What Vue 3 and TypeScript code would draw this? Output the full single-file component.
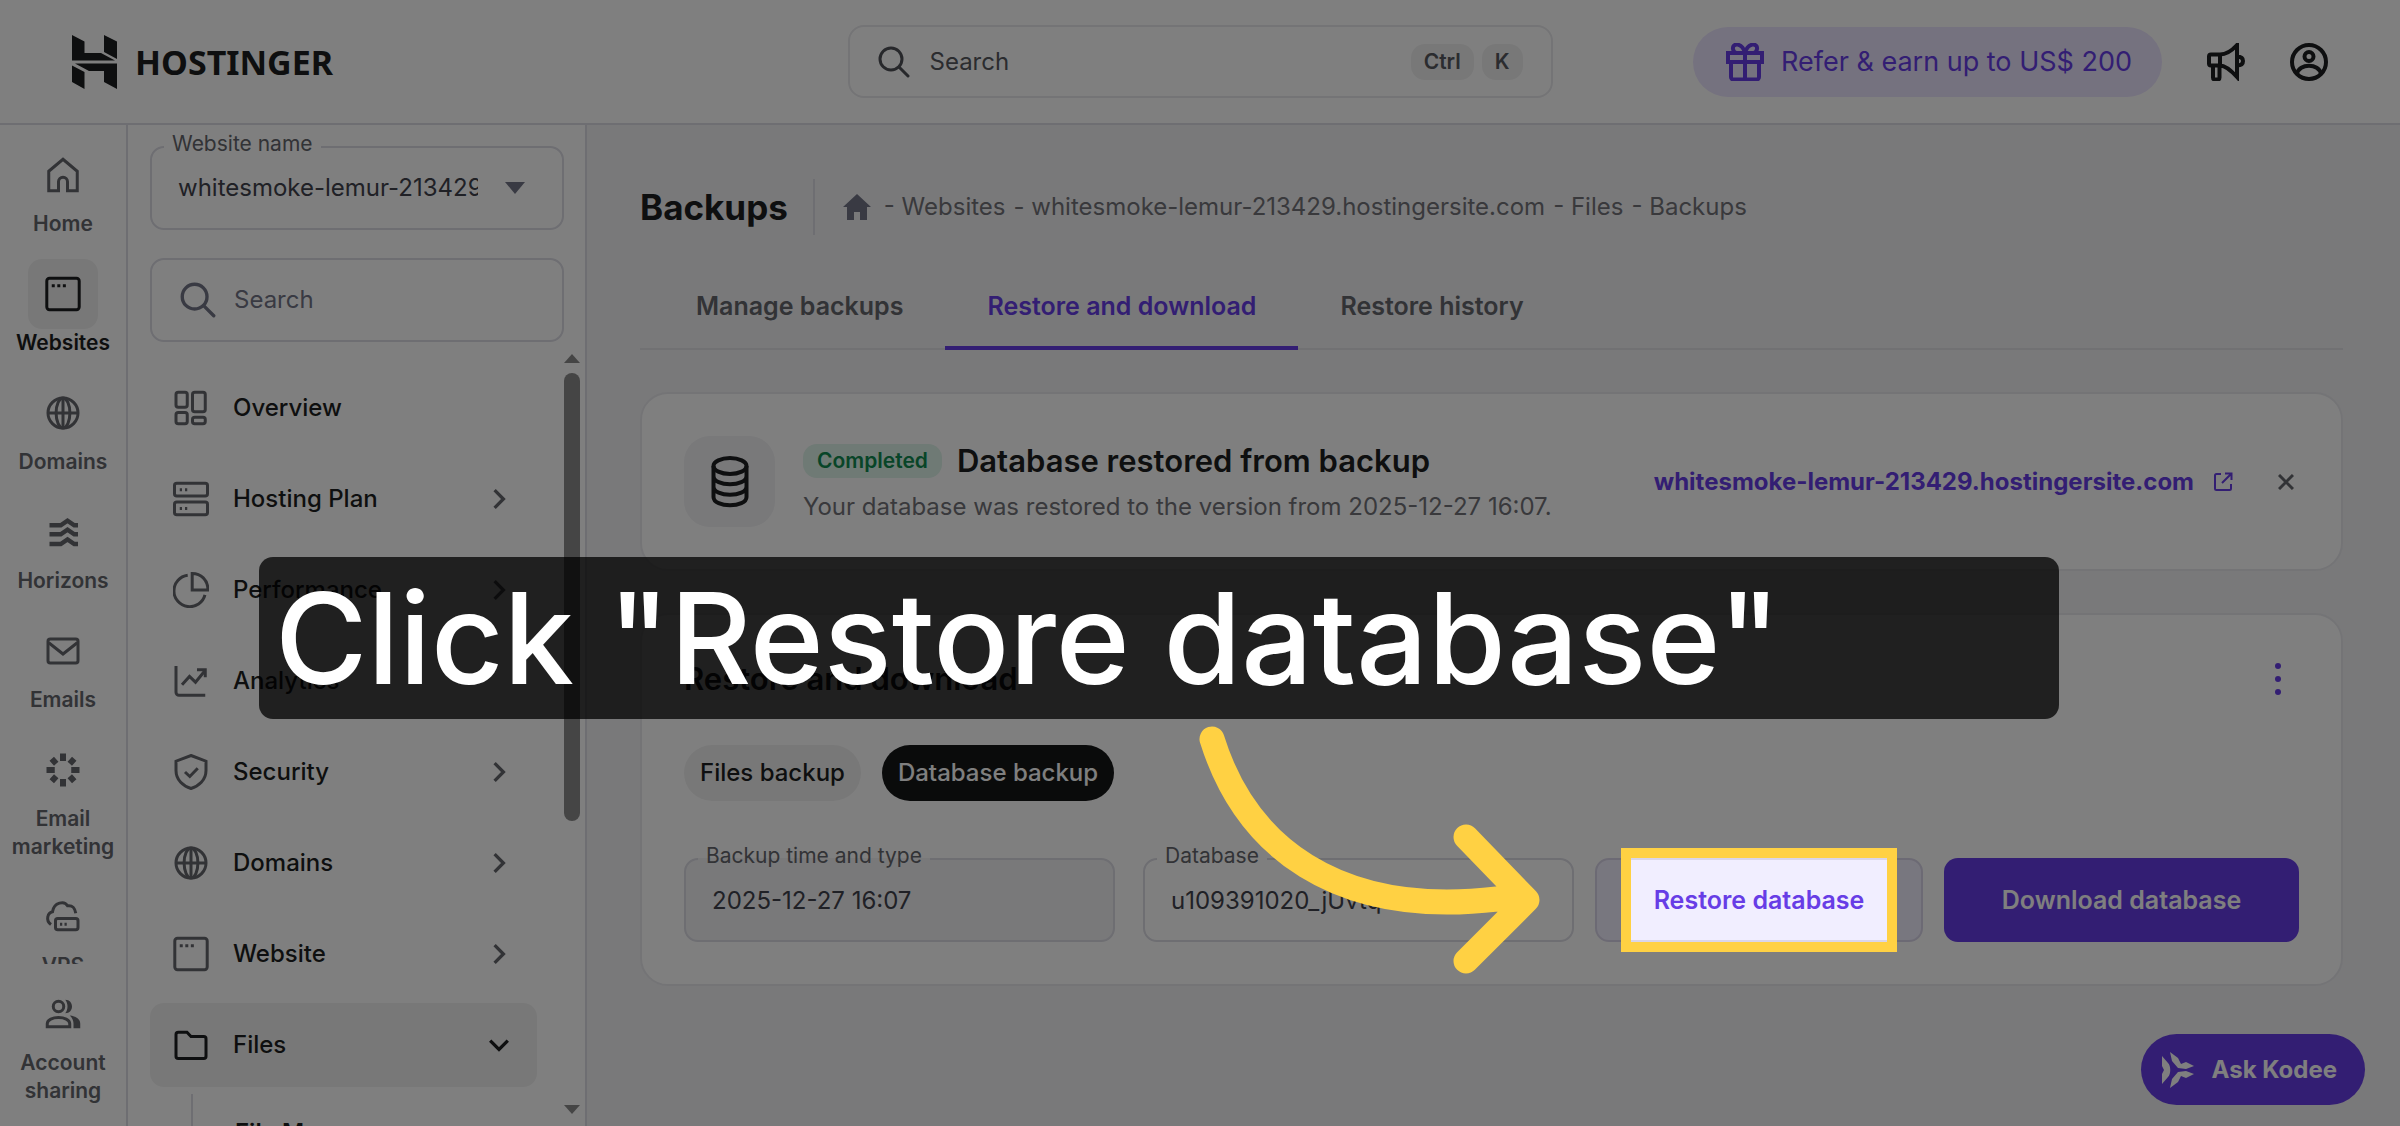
<script setup lang="ts">
interface RailItem {
  label: string
  icon: string
  active?: boolean
}

interface MenuItem {
  label: string
  icon: string
  expandable?: boolean
  open?: boolean
}

// Icons share a 24-unit grid; strokes use the current text colour.
const icons: Record<string, string> = {
  home: '<path d="M2.5 9.5 12 1.5l9.500 8V22.500H15v-6a3 3 0 0 0-6 0v6H2.500z"/>',
  window: '<rect x="1.200" y="1.500" width="21.600" height="21" rx="1.800"/><path d="M4.500 6.500h2M8.200 6.500h2M11.900 6.500h2"/>',
  globe: '<circle cx="12" cy="12" r="10"/><ellipse cx="12" cy="12" rx="4.600" ry="10"/><path d="M2 12h20M12 2v20"/>',
  horizons: '<g stroke-width="3"><path d="M3 7.500h7.500l4.500-3 4.500 3H22M3 13.500h7.500l4.500-3 4.500 3H22M3 20h7.500l4.500-3 4.500 3H22"/></g>',
  mail: '<rect x="2" y="4" width="20" height="16" rx="1.500"/><path d="m2.500 6.500 9.500 7.500 9.500-7.500"/>',
  burst: '<g stroke-width="4"><path d="M12 1v5M12 18v5M1 12h5.500M17.500 12H23M4.500 4.500 7.500 7.800M16.500 16.200l3 3.300M4.500 19.500l3-3.300M16.500 7.800l3-3.300"/></g>',
  cloud: '<path d="M4 17c-4-3-2-8 1-8.500C6 2 13 1 15 4.500c4-.5 5 2 5.500 5"/><rect x="7" y="13" width="15" height="7.500" rx="1.500"/><path d="M10 16.800h1.500M13 16.800h1.500"/>',
  people: '<circle cx="9" cy="7" r="3.500"/><path d="M1.500 20.500v-2c0-5.500 15-5.500 15 0v2z"/><path fill="currentColor" stroke="none" d="M13.500 2.500c6 0 6 9 0 9 2-2.500 2-6.500 0-9zM16.500 13c4.500.5 7 2.500 7 5.500v3h-4.500v-3c0-2-.8-4-2.500-5.500z"/>',
  grid: '<rect x="2" y="1.500" width="7.500" height="10" rx="1.500"/><rect x="2" y="15" width="7.500" height="7.500" rx="1.500"/><rect x="13" y="1.500" width="8.500" height="13" rx="1.500"/><rect x="13" y="18.200" width="8.500" height="4.300" rx="1.500"/>',
  server: '<rect x="1" y="1.500" width="22" height="8.500" rx="1.500"/><rect x="1" y="14" width="22" height="8.500" rx="1.500"/><path d="M4.500 5.800h1.500M8 5.800h1.500M4.500 18.300h1.500M8 18.300h1.500"/>',
  pie: '<path d="M9.800 2.200a10.500 10.500 0 1 0 11.500 13"/><path d="M12.800 1v11h10.500C23.300 5 18.500 1 12.800 1z"/>',
  chart: '<path d="M2 2v17.500a2 2 0 0 0 2 2h17.500M6 14.500l5-5.500 4 3.800 6-7.300"/><path d="M16 4.500h5.500v5"/>',
  shield: '<path d="m12 1 10 3.800v6.200c0 6.500-5 10.500-10 12-5-1.500-10-5.500-10-12V4.800z"/><path d="m8 12 3.200 3 5.300-5.500"/>',
  folder: '<path d="M2 5a1.500 1.500 0 0 1 1.500-1.500h5.800L12 6.300h8.500A1.500 1.500 0 0 1 22 7.800v11.700a1.500 1.500 0 0 1-1.500 1.500h-17A1.500 1.500 0 0 1 2 19.500z"/>',
}

const railItems: RailItem[] = [
  { label: 'Home', icon: 'home' },
  { label: 'Websites', icon: 'window', active: true },
  { label: 'Domains', icon: 'globe' },
  { label: 'Horizons', icon: 'horizons' },
  { label: 'Emails', icon: 'mail' },
  { label: 'Email marketing', icon: 'burst' },
  { label: 'VPS', icon: 'cloud' },
]

const menuItems: MenuItem[] = [
  { label: 'Overview', icon: 'grid' },
  { label: 'Hosting Plan', icon: 'server', expandable: true },
  { label: 'Performance', icon: 'pie', expandable: true },
  { label: 'Analytics', icon: 'chart' },
  { label: 'Security', icon: 'shield', expandable: true },
  { label: 'Domains', icon: 'globe', expandable: true },
  { label: 'Website', icon: 'window', expandable: true },
  { label: 'Files', icon: 'folder', expandable: true, open: true },
]

const tabs = ['Manage backups', 'Restore and download', 'Restore history']
const activeTab = 'Restore and download'
const crumbs = ['Websites', 'whitesmoke-lemur-213429.hostingersite.com', 'Files', 'Backups']
</script>

<template>
  <div class="app">
    <header class="topbar">
      <a class="brand" href="#">
        <svg class="brand-mark" viewBox="0 0 45 54" aria-hidden="true">
          <path d="M0 0 12.500 6.500V18H29l14 7.500H0zM32 0l13 6.500V24l-13-7zM0 30.500l12.500 6.500V54L0 47zM3 28.500h42V54l-13-7V36H17z" fill="currentColor" />
        </svg>
        <span>HOSTINGER</span>
      </a>
      <label class="global-search">
        <svg class="icon-search" viewBox="0 0 32 32" aria-hidden="true"><circle cx="13" cy="13" r="11" /><path d="m21 21 9 9" /></svg>
        <input type="text" placeholder="Search" aria-label="Search everything" />
        <kbd>Ctrl</kbd>
        <kbd>K</kbd>
      </label>
      <div class="top-actions">
        <button class="refer" type="button">
          <svg viewBox="0 0 38 38" aria-hidden="true"><path d="M2 10h34v9H2zM5 19h28v15a2.500 2.500 0 0 1-2.500 2.500h-23A2.500 2.500 0 0 1 5 34zM19 10v26M19 10C16-1 6 0 7 6c.3 2 1.500 3.500 3 4M19 10c3-11 13-10 12-4-.3 2-1.500 3.500-3 4" /></svg>
          <span>Refer &amp; earn up to US$ 200</span>
        </button>
        <button class="icon-button" type="button" aria-label="Announcements">
          <svg viewBox="0 0 38 38" aria-hidden="true"><path d="M13 11.500H4A2 2 0 0 0 2 13.500v7a2 2 0 0 0 2 2h9zM13 11.500c6 0 12-4 17-9.500v32c-5-5.500-11-11.500-17-11.500M6 23v11.500a2 2 0 0 0 2 2h2.500a2 2 0 0 0 2-2V23M30 13.500c3.500 0 6 1.500 6 4.500s-2.500 4.500-6 4.500" /></svg>
        </button>
        <button class="icon-button" type="button" aria-label="Profile">
          <svg viewBox="0 0 38 38" aria-hidden="true"><circle cx="19" cy="19" r="17" /><circle cx="19" cy="13.500" r="4.500" /><path d="M7 31c2-11 22-11 24 0" /></svg>
        </button>
      </div>
    </header>

    <div class="body">
      <nav class="rail" aria-label="Main">
        <div class="rail-scroll">
          <a v-for="item in railItems" :key="item.label" href="#" class="rail-item" :class="{ active: item.active }">
            <span class="rail-tile"><svg viewBox="0 0 24 24" aria-hidden="true" v-html="icons[item.icon]" /></span>
            <span>{{ item.label }}</span>
          </a>
        </div>
        <div class="rail-bottom">
          <a href="#" class="rail-item">
            <span class="rail-tile"><svg viewBox="0 0 24 24" aria-hidden="true" v-html="icons.people" /></span>
            <span>Account sharing</span>
          </a>
        </div>
      </nav>

      <aside class="sidebar">
        <div class="field website-field">
          <label for="website">Website name</label>
          <select id="website"><option>whitesmoke-lemur-213429.hostingersite.com</option></select>
          <svg class="caret" viewBox="0 0 20 12" aria-hidden="true"><path d="M0 0h20L10 12z" /></svg>
        </div>
        <label class="side-search">
          <svg class="icon-search" viewBox="0 0 32 32" aria-hidden="true"><circle cx="13" cy="13" r="11" /><path d="m21 21 9 9" /></svg>
          <input type="text" placeholder="Search" aria-label="Search menu" />
        </label>
        <div class="menu-wrap">
          <nav class="menu" aria-label="Website">
            <a v-for="item in menuItems" :key="item.label" href="#" class="menu-item" :class="{ open: item.open }">
              <svg class="menu-icon" viewBox="0 0 24 24" aria-hidden="true" v-html="icons[item.icon]" />
              <span>{{ item.label }}</span>
              <svg v-if="item.expandable" class="chevron" viewBox="0 0 20 20" aria-hidden="true"><path d="m6 2 8 8-8 8" /></svg>
            </a>
            <div class="submenu"><a href="#">File Manager</a></div>
          </nav>
          <div class="scrollbar" aria-hidden="true">
            <svg viewBox="0 0 16 9"><path d="M8 0l8 9H0z" /></svg>
            <div class="track"><div class="thumb" /></div>
            <svg viewBox="0 0 16 9"><path d="M0 0h16L8 9z" /></svg>
          </div>
        </div>
      </aside>

      <main class="content">
        <div class="page-head">
          <h1>Backups</h1>
          <div class="crumbs">
            <svg viewBox="0 0 28 26" aria-label="Home"><path d="M14 0 28 13h-4v13h-7v-8h-6v8H4V13H0z" /></svg>
            <span v-for="crumb in crumbs" :key="crumb">- {{ crumb }}</span>
          </div>
        </div>

        <div class="tabs" role="tablist">
          <button v-for="tab in tabs" :key="tab" type="button" role="tab" :class="{ active: tab === activeTab }">{{ tab }}</button>
        </div>

        <section class="card notice">
          <div class="notice-icon">
            <svg viewBox="0 0 38 52" aria-hidden="true"><ellipse cx="19" cy="10" rx="16.500" ry="8" /><path d="M2.500 10v31c0 11 33 11 33 0V10M2.500 20c0 11 33 11 33 0M2.500 30.500c0 11 33 11 33 0" /></svg>
          </div>
          <div class="notice-text">
            <div class="notice-title"><span class="badge">Completed</span><h2>Database restored from backup</h2></div>
            <p>Your database was restored to the version from 2025-12-27 16:07.</p>
          </div>
          <a class="site-link" href="#">
            whitesmoke-lemur-213429.hostingersite.com
            <svg viewBox="0 0 20 20" aria-hidden="true"><path d="M8 2H3.500A1.500 1.500 0 0 0 2 3.500v13A1.500 1.500 0 0 0 3.500 18h13a1.500 1.500 0 0 0 1.500-1.500V12M12 1.500h6.500V8M18 2 9 11" /></svg>
          </a>
          <button class="close" type="button" aria-label="Dismiss">
            <svg viewBox="0 0 16 16" aria-hidden="true"><path d="m1 1 14 14M15 1 1 15" /></svg>
          </button>
        </section>

        <section class="card restore">
          <div class="restore-head">
            <h2>Restore and download</h2>
            <button type="button" aria-label="More options">
              <svg viewBox="0 0 6 32" aria-hidden="true"><circle cx="3" cy="3" r="3" /><circle cx="3" cy="16" r="3" /><circle cx="3" cy="29" r="3" /></svg>
            </button>
          </div>
          <div class="chips">
            <button type="button">Files backup</button>
            <button type="button" class="selected">Database backup</button>
          </div>
          <form class="restore-form" @submit.prevent>
            <div class="fields">
              <div class="field filled">
                <label for="time">Backup time and type</label>
                <input id="time" type="text" value="2025-12-27 16:07" readonly />
              </div>
              <div class="field">
                <label for="db">Database</label>
                <input id="db" type="text" value="u109391020_jUvtq" readonly />
              </div>
            </div>
            <div class="restore-cell">
              <button class="restore-button" type="button">Restore database</button>
              <div class="spotlight" aria-hidden="true" />
            </div>
            <button class="download-button" type="button">Download database</button>
          </form>
        </section>
      </main>
    </div>

    <button class="kodee" type="button">
      <svg viewBox="0 0 32 36" aria-hidden="true"><path d="M0 4l6 7c3 3 3 11 0 14l-6 7V22l2-4-2-4zM8 0l8 6 3 6 5-2 8 4-8 3-8-1-6-7zM8 36l8-6 3-6 5 2 8-4-8-3-8 1-6 7z" /></svg>
      <span>Ask Kodee</span>
    </button>

    <div class="caption">Click "Restore database"</div>
    <svg class="arrow" viewBox="0 0 360 280" aria-hidden="true"><path d="M22 29C55 135 145 208 307 189L335 190M276 127 337 190 276 251" /></svg>
  </div>
</template>

<style>
body {
  margin: 0;
}
</style>

<style scoped>
.app {
  --ink: #1d1e20;
  --muted: #65666c;
  --line: #dcdce4;
  --soft: #f1f1f1;
  --purple: #673de6;
  position: relative;
  display: flex;
  flex-direction: column;
  height: 100vh;
  overflow: hidden;
  background: #f2f2f5;
  color: var(--ink);
  font: 400 24px/36px Inter, 'Liberation Sans', sans-serif;
}
.app *,
.app *::before {
  box-sizing: border-box;
}
button,
input,
select {
  margin: 0;
  padding: 0;
  border: 0;
  background: none;
  color: inherit;
  font: inherit;
  outline: 0;
}
a {
  color: inherit;
  text-decoration: none;
}
h1,
h2,
p {
  margin: 0;
}
svg {
  display: block;
  flex: none;
  fill: none;
  stroke: currentColor;
  stroke-width: 2;
}
input {
  min-width: 0;
}
input::placeholder {
  color: #727586;
  opacity: 1;
}

.topbar {
  flex: none;
  display: grid;
  grid-template-columns: 1fr 705px 1fr;
  align-items: center;
  height: 125px;
  padding: 0 72px;
  border-bottom: 2px solid var(--line);
  background: #fff;
}
.brand {
  display: flex;
  align-items: center;
  gap: 18px;
  font: 700 34px/40px 'Noto Sans', sans-serif;
}
.brand-mark {
  width: 45px;
  height: 54px;
  stroke: none;
}
.global-search {
  display: flex;
  align-items: center;
  height: 73px;
  padding: 0 28px;
  border: 2px solid #e9e9ec;
  border-radius: 16px;
}
.icon-search {
  width: 32px;
  height: 32px;
  stroke-width: 3;
  stroke-linecap: round;
  color: #4f5057;
}
.global-search input {
  flex: 1;
  margin-left: 20px;
}
.global-search input::placeholder {
  color: #56585e;
}
kbd {
  margin-left: 8px;
  padding: 0 13px;
  border-radius: 14px;
  background: var(--soft);
  color: #56585e;
  font: 600 21px/36px Inter, sans-serif;
}
.top-actions {
  display: flex;
  align-items: center;
  justify-content: flex-end;
  gap: 45px;
}
.refer {
  display: flex;
  align-items: center;
  gap: 17px;
  height: 70px;
  padding: 0 30px 0 33px;
  border-radius: 35px;
  background: #ebe4ff;
  color: var(--purple);
  font-size: 27px;
}
.refer svg,
.icon-button svg {
  width: 38px;
  height: 38px;
  stroke-width: 4;
}

.body {
  flex: 1;
  display: flex;
  min-height: 0;
}
.rail {
  flex: none;
  display: flex;
  flex-direction: column;
  width: 128px;
  border-right: 2px solid var(--line);
  background: #fff;
  color: var(--muted);
  font: 600 21px/28px Inter, sans-serif;
}
.rail-scroll {
  flex: 1;
  display: flex;
  flex-direction: column;
  gap: 21px;
  min-height: 0;
  padding-top: 15px;
  overflow: hidden;
}
.rail-bottom {
  flex: none;
  padding: 15px 0 21px;
}
.rail-item {
  flex: none;
  display: flex;
  flex-direction: column;
  align-items: center;
  padding: 0 8px;
  text-align: center;
}
.rail-tile {
  display: grid;
  place-items: center;
  width: 70px;
  height: 70px;
  border-radius: 14px;
}
.rail-tile svg {
  width: 36px;
  height: 36px;
}
.rail-item.active {
  color: var(--ink);
}
.rail-item.active .rail-tile {
  background: var(--soft);
}

.sidebar {
  flex: none;
  display: flex;
  flex-direction: column;
  width: 459px;
  padding-top: 21px;
  border-right: 2px solid var(--line);
  background: #fff;
}
.field {
  position: relative;
  height: 84px;
}
.field label {
  position: absolute;
  top: -16px;
  left: 14px;
  padding: 0 8px;
  background: #fff;
  color: var(--muted);
  font-size: 21px;
  line-height: 28px;
}
.field input,
.field select {
  display: block;
  width: 100%;
  height: 100%;
  padding: 0 26px;
  border: 2px solid var(--line);
  border-radius: 14px;
  color: #41424c;
}
.field select {
  appearance: none;
  padding-right: 84px;
  text-overflow: clip;
}
.field.filled input {
  background: #f2f2f5;
}
.field.filled label {
  background: linear-gradient(#fff 57%, #f2f2f5 57%);
}
.website-field {
  flex: none;
  margin: 0 21px 28px 22px;
}
.caret {
  position: absolute;
  top: 36px;
  right: 39px;
  width: 20px;
  height: 12px;
  fill: #727586;
  stroke: none;
}
.side-search {
  flex: none;
  display: flex;
  align-items: center;
  height: 84px;
  margin: 0 21px 0 22px;
  padding: 0 28px;
  border: 2px solid var(--line);
  border-radius: 14px;
}
.side-search .icon-search {
  width: 36px;
  height: 36px;
  color: #727586;
}
.side-search input {
  flex: 1;
  margin-left: 18px;
}
.menu-wrap {
  flex: 1;
  display: flex;
  justify-content: space-between;
  min-height: 0;
  padding: 10px 5px 0 22px;
}
.menu {
  display: flex;
  flex-direction: column;
  gap: 7px;
  width: 387px;
  padding-top: 14px;
  overflow: hidden;
  font-weight: 500;
}
.menu-item {
  flex: none;
  display: flex;
  align-items: center;
  height: 84px;
  padding: 0 27px 0 23px;
  border-radius: 14px;
}
.menu-icon {
  width: 36px;
  height: 36px;
  margin-right: 24px;
  color: var(--muted);
}
.chevron {
  width: 22px;
  height: 22px;
  margin-left: auto;
  stroke-width: 3;
  color: var(--muted);
}
.menu-item.open {
  background: var(--soft);
}
.menu-item.open svg {
  color: var(--ink);
}
.menu-item.open .chevron {
  transform: rotate(90deg);
}
.submenu {
  flex: none;
  margin-left: 41px;
  padding: 21px 0 0 42px;
  border-left: 2px solid var(--line);
  font-weight: 600;
}
.scrollbar {
  display: flex;
  flex-direction: column;
  gap: 10px;
  width: 16px;
  padding: 2px 0 12px;
}
.scrollbar svg {
  width: 16px;
  height: 9px;
  fill: #8b8b8b;
  stroke: none;
}
.track {
  flex: 1;
}
.thumb {
  height: 62%;
  border-radius: 8px;
  background: #8b8b8b;
}

.content {
  flex: 1;
  min-width: 0;
  padding: 54px 57px 0 53px;
}
.page-head {
  display: flex;
  align-items: center;
  height: 56px;
}
h1 {
  padding-right: 25px;
  font-size: 35px;
  line-height: 56px;
  font-weight: 700;
}
.crumbs {
  display: flex;
  align-items: center;
  gap: 8px;
  height: 56px;
  padding-left: 28px;
  border-left: 2px solid var(--line);
  color: #727379;
}
.crumbs svg {
  width: 28px;
  height: 26px;
  margin-right: 5px;
  fill: #727586;
  stroke: none;
}
.tabs {
  display: flex;
  height: 115px;
  padding: 27px 0 0 14px;
  border-bottom: 2px solid #e2e2e6;
}
.tabs button {
  height: 88px;
  padding: 4px 42px 0;
  border-bottom: 4px solid transparent;
  color: var(--muted);
  font-size: 25px;
  font-weight: 600;
}
.tabs button.active {
  border-color: var(--purple);
  color: var(--purple);
}
.card {
  border: 2px solid #e9e9ed;
  border-radius: 28px;
  background: #fff;
}
.notice {
  display: flex;
  align-items: center;
  height: 179px;
  margin-top: 42px;
  padding: 0 47px 0 42px;
}
.notice-icon {
  display: grid;
  place-items: center;
  width: 91px;
  height: 91px;
  border-radius: 26px;
  background: #f2f2f5;
}
.notice-icon svg {
  width: 38px;
  height: 52px;
  stroke-width: 4;
}
.notice-text {
  margin-left: 28px;
}
.notice-title {
  display: flex;
  align-items: center;
  gap: 15px;
  height: 44px;
  margin-bottom: 6px;
}
.badge {
  padding: 0 14px;
  border-radius: 14px;
  background: #def4ea;
  color: #108a50;
  font-size: 21px;
  line-height: 34px;
  font-weight: 600;
}
h2 {
  font-size: 31px;
  line-height: 44px;
  font-weight: 600;
}
.notice p {
  color: #727379;
}
.site-link {
  display: flex;
  align-items: center;
  gap: 19px;
  margin-left: auto;
  color: var(--purple);
  font-weight: 700;
}
.site-link svg {
  width: 20px;
  height: 20px;
}
.close {
  margin-left: 45px;
  color: var(--muted);
}
.close svg {
  width: 16px;
  height: 16px;
  stroke-width: 3;
}
.restore {
  margin-top: 42px;
  padding: 42px;
}
.restore-head {
  display: flex;
  align-items: center;
  justify-content: space-between;
  height: 44px;
}
.restore-head button {
  padding: 0 18px;
}
.restore-head svg {
  width: 6px;
  height: 32px;
  fill: var(--purple);
  stroke: none;
}
.chips {
  display: flex;
  gap: 21px;
  margin: 44px 0 57px;
}
.chips button {
  height: 56px;
  padding: 0 16px;
  border-radius: 28px;
  background: var(--soft);
  font-weight: 500;
}
.chips .selected {
  background: #151617;
  color: #fff;
}
.restore-form {
  display: flex;
  gap: 21px;
}
.fields {
  flex: 1;
  display: flex;
  gap: 28px;
}
.fields .field {
  flex: 1;
}
.restore-cell {
  position: relative;
}
.restore-button,
.download-button {
  height: 84px;
  border-radius: 14px;
  font-size: 25px;
  font-weight: 600;
}
.restore-button {
  width: 328px;
  border: 2px solid #d9d5e8;
  background: #f1eeff;
  color: var(--purple);
}
.download-button {
  width: 355px;
  background: var(--purple);
  color: #fff;
}
/* The yellow frame leaves its inside bright and dims everything around it. */
.spotlight {
  position: absolute;
  z-index: 10;
  inset: -10px 26px;
  border: 10px solid #ffd143;
  box-shadow: 0 0 0 3000px rgba(0, 0, 0, 0.5);
  pointer-events: none;
}
.kodee {
  position: absolute;
  right: 35px;
  bottom: 21px;
  display: flex;
  align-items: center;
  gap: 18px;
  height: 71px;
  padding: 0 28px 0 21px;
  border-radius: 36px;
  background: var(--purple);
  color: #fff;
  font-weight: 700;
}
.kodee svg {
  width: 32px;
  height: 36px;
  fill: currentColor;
  stroke: none;
}
.caption {
  position: absolute;
  z-index: 20;
  top: 557px;
  left: 259px;
  width: 75%;
  padding: 0 16px;
  border-radius: 14px;
  background: rgba(0, 0, 0, 0.75);
  color: #fff;
  font-size: 126px;
  line-height: 162px;
  font-weight: 500;
  white-space: nowrap;
}
.arrow {
  position: absolute;
  z-index: 20;
  top: 710px;
  left: 1190px;
  width: 360px;
  height: 280px;
  stroke: #ffd143;
  stroke-width: 25;
  stroke-linecap: round;
  stroke-linejoin: round;
}
</style>
